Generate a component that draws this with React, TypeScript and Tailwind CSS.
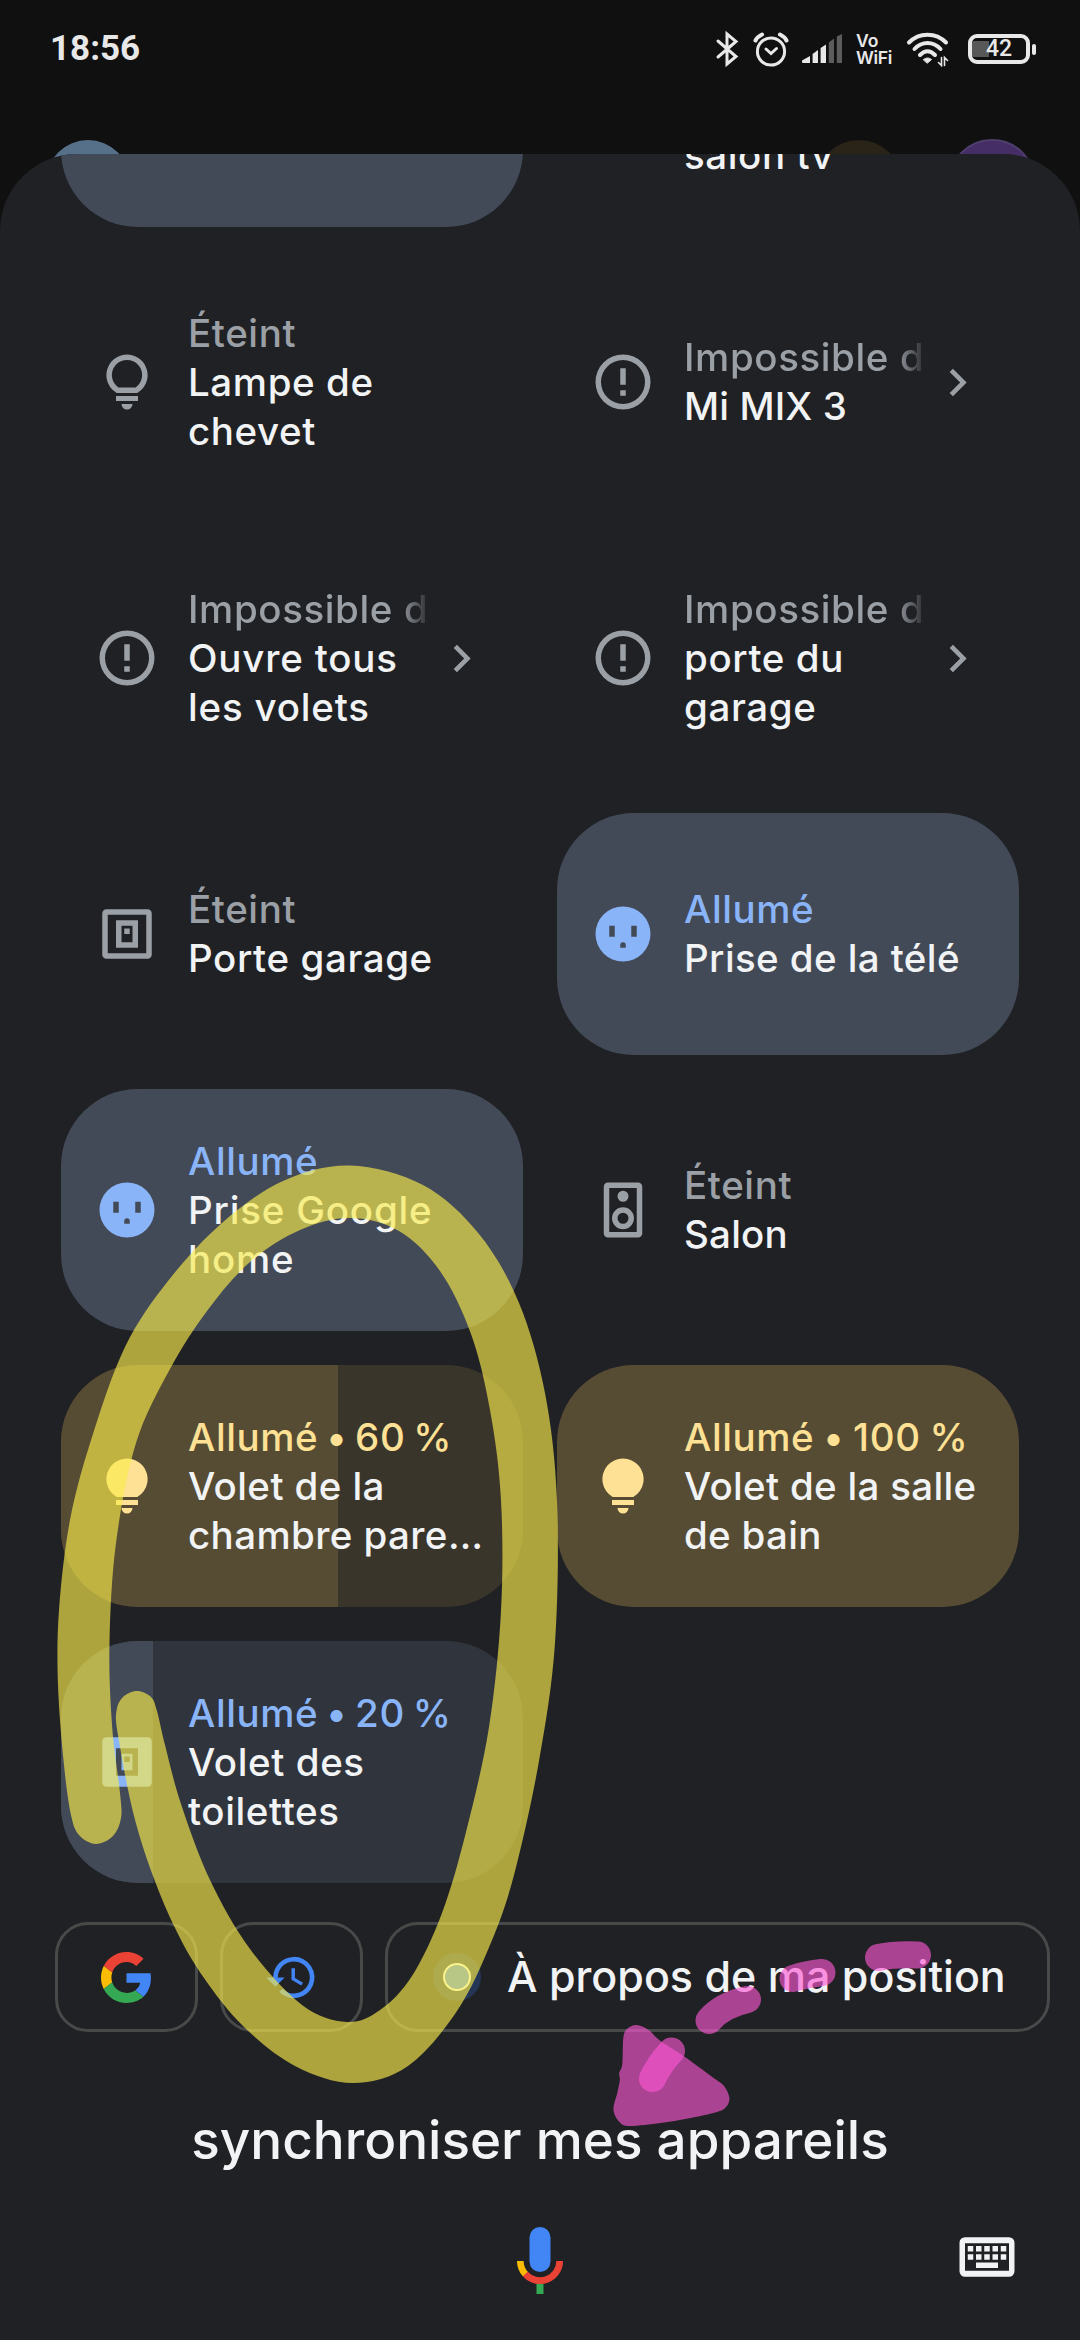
import React from 'react';

type IconName = 'bulb' | 'bulbOn' | 'error' | 'switch' | 'switchOn' | 'outlet' | 'speaker';
type Tone = 'off' | 'blue' | 'amber';

interface Device {
  state: string;
  lines: string[];
  icon?: IconName;
  tone: Tone;
  level?: number;
  link?: boolean;
  stateClass?: string;
  titleClass?: string;
}

const devices: Device[] = [
  { state: '', lines: [''], tone: 'blue' },
  { state: '\u00a0', lines: ['\u00a0', 'salon tv'], tone: 'off' },
  { state: 'Éteint', lines: ['Lampe de', 'chevet'], icon: 'bulb', tone: 'off' },
  { state: 'Impossible de', lines: ['Mi MIX 3'], icon: 'error', tone: 'off', link: true, titleClass: 'tracking-[0.1px]' },
  { state: 'Impossible de', lines: ['Ouvre tous', 'les volets'], icon: 'error', tone: 'off', link: true, titleClass: 'tracking-[0.8px]' },
  { state: 'Impossible de', lines: ['porte du', 'garage'], icon: 'error', tone: 'off', link: true },
  { state: 'Éteint', lines: ['Porte garage'], icon: 'switch', tone: 'off' },
  { state: 'Allumé', lines: ['Prise de la télé'], icon: 'outlet', tone: 'blue', titleClass: 'tracking-[0.4px]' },
  { state: 'Allumé', lines: ['Prise Google', 'home'], icon: 'outlet', tone: 'blue', titleClass: 'tracking-[0.8px]' },
  { state: 'Éteint', lines: ['Salon'], icon: 'speaker', tone: 'off', titleClass: 'tracking-[0.2px]' },
  {
    state: 'Allumé • 60 %',
    lines: ['Volet de la', 'chambre pare…'],
    icon: 'bulbOn',
    tone: 'amber',
    level: 60,
    stateClass: '[word-spacing:-3px]',
    titleClass: 'tracking-[0.4px]',
  },
  {
    state: 'Allumé • 100 %',
    lines: ['Volet de la salle', 'de bain'],
    icon: 'bulbOn',
    tone: 'amber',
    stateClass: '[word-spacing:-2px]',
    titleClass: 'tracking-[0.3px]',
  },
  { state: 'Allumé • 20 %', lines: ['Volet des', 'toilettes'], icon: 'switchOn', tone: 'blue', level: 20, stateClass: '[word-spacing:-3px]' },
];

const iconPaths: Record<IconName, string> = {
  bulb: 'M8.26 16A7.5 7.5 0 1 1 15.74 16ZM8.84 14H15.16A5.5 5.5 0 1 0 8.84 14ZM8 17.1H16V18.9H8ZM10 20H14A2 2 0 0 1 10 20Z',
  bulbOn: 'M8.26 16A7.5 7.5 0 1 1 15.74 16ZM8 17.1H16V18.9H8ZM10 20H14A2 2 0 0 1 10 20Z',
  error: 'M12 2A10 10 0 1 1 12 22A10 10 0 1 1 12 2ZM12 4A8 8 0 1 0 12 20A8 8 0 1 0 12 4ZM11 7H13V13H11ZM11 15H13V17H11Z',
  switch: 'M4.5 3H19.5A1.5 1.5 0 0 1 21 4.5V19.5A1.5 1.5 0 0 1 19.5 21H4.5A1.5 1.5 0 0 1 3 19.5V4.5A1.5 1.5 0 0 1 4.5 3ZM5 5V19H19V5ZM8 7H16V17H8ZM10 9V15H14V9ZM11 10H13V12H11Z',
  switchOn: 'M4.5 3H19.5A1.5 1.5 0 0 1 21 4.5V19.5A1.5 1.5 0 0 1 19.5 21H4.5A1.5 1.5 0 0 1 3 19.5V4.5A1.5 1.5 0 0 1 4.5 3ZM8 7V17H16V7ZM10 9H14V15H10ZM11 10V12H13V10Z',
  outlet: 'M12 2A10 10 0 1 1 12 22A10 10 0 1 1 12 2ZM7 9V13H9V9ZM15 9V13H17V9ZM11 17H13V16A1 1 0 0 0 11 16Z',
  speaker: 'M6.5 2H17.5A1.5 1.5 0 0 1 19 3.5V20.5A1.5 1.5 0 0 1 17.5 22H6.5A1.5 1.5 0 0 1 5 20.5V3.5A1.5 1.5 0 0 1 6.5 2ZM7 4V20H17V4ZM12 5A2 2 0 1 1 12 9A2 2 0 1 1 12 5ZM12 11A4 4 0 1 1 12 19A4 4 0 1 1 12 11ZM12 13A2 2 0 1 0 12 17A2 2 0 1 0 12 13Z',
};

const tileBg: Record<Tone, string> = {
  off: '',
  blue: 'bg-[#434a57]',
  amber: 'bg-[#564b33]',
};

const dimBg: Record<Tone, string> = {
  off: '',
  blue: 'bg-[#30343d]',
  amber: 'bg-[#3a352b]',
};

const accent: Record<Tone, string> = {
  off: 'text-[#9aa0a6]',
  blue: 'text-[#8ab4f8]',
  amber: 'text-[#fee194]',
};

const Tile: React.FC<{ device: Device }> = ({ device }) => {
  const { state, lines, icon, tone, level, link, stateClass = '', titleClass = 'tracking-[0.6px]' } = device;
  const sliding = level !== undefined;

  return (
    <div
      className={`relative flex h-[242px] items-center overflow-hidden rounded-[77px] pl-[33px] pr-[34px] ${
        sliding ? dimBg[tone] : tileBg[tone]
      }`}
    >
      {sliding && <div className={`absolute inset-y-0 left-0 ${tileBg[tone]}`} style={{ width: `${level}%` }} />}
      <svg viewBox="0 0 24 24" className={`relative size-[66px] shrink-0 ${accent[tone]}`}>
        {icon && <path d={iconPaths[icon]} fill="currentColor" fillRule="evenodd" />}
      </svg>
      <div className="relative ml-[28px] min-w-0 flex-1 whitespace-nowrap text-[38.5px] font-medium leading-[49px]">
        <div
          className={`tracking-[0.6px] ${accent[tone]} ${stateClass} ${
            link ? 'overflow-hidden [mask-image:linear-gradient(to_right,black_86%,transparent_99%)]' : ''
          }`}
        >
          {state}
        </div>
        {lines.map((line, i) => (
          <div key={i} className={`text-[#f1f3f4] ${titleClass}`}>
            {line}
          </div>
        ))}
      </div>
      {link && (
        <svg viewBox="0 0 24 24" className="relative size-[55px] shrink-0 text-[#9aa0a6]">
          <path d="M10 6L8.59 7.41L13.17 12L8.59 16.59L10 18L16 12Z" fill="currentColor" />
        </svg>
      )}
    </div>
  );
};

const StatusIcons: React.FC = () => (
  <div className="flex items-center text-[#e8e8e8]">
    <svg width="24" height="38" viewBox="0 0 24 38" fill="none" stroke="currentColor" strokeWidth="3" strokeLinecap="round">
      <path d="M3 11L21 26.5L12 34V4L21 11.5L3 27" />
    </svg>
    <svg width="36" height="38" viewBox="0 0 36 38" className="ml-[14px]" fill="none" stroke="currentColor" strokeWidth="3" strokeLinecap="round">
      <circle cx="18" cy="21.5" r="13.6" />
      <path d="M13 19L18 23.5L23.5 18.5" />
      <path d="M2.5 10.5C4 7.5 6 6 9 4.5M33.5 10.5C32 7.5 30 6 27 4.5" strokeWidth="4" />
    </svg>
    <svg width="40" height="30" viewBox="0 0 40 30" className="ml-[13px]" fill="currentColor">
      <path d="M0 26.5L8 22V29H1Q0 29 0 28ZM10.6 20L16 16V29H10.6ZM18.6 14L24 10.5V29H18.6Z" />
      <path d="M26.8 8.5L32 4.5V29H26.8ZM34.8 2.5L40 0V29H34.8Z" fill="#5c5c5c" />
    </svg>
    <div className="ml-[14px] flex w-[37px] flex-col text-[17.5px] font-semibold leading-[17px]">
      <span>Vo</span>
      <span className="tracking-[-0.3px]">WiFi</span>
    </div>
    <svg width="44" height="36" viewBox="0 0 44 36" className="ml-[13px]" fill="none" stroke="currentColor" strokeWidth="4" strokeLinecap="round">
      <path d="M3 11.5C13 1 30 1 40 11.5" />
      <path d="M8.5 18C16 10 27 10 34.5 18" />
      <path d="M14 24C19 19 24 19 29 24" />
      <path d="M17.5 28.5C20 26.5 23 26.5 25.5 28.5L21.5 32Z" fill="currentColor" strokeWidth="1" />
      <path d="M35.5 26.5V34.5L32.5 31.5M38.5 34.5V26.5L41.5 29.5" strokeWidth="1.6" />
    </svg>
    <div className="ml-[18px] flex items-center gap-[2px]">
      <div className="relative flex h-[30px] w-[62px] items-center justify-center rounded-[9px] border-4 border-[#e8e8e8]">
        <div className="absolute bottom-[3px] left-0 top-[3px] w-[17px] bg-[#585858]" />
        <span className="relative font-['Roboto',sans-serif] text-[23px] font-medium leading-[22px]">42</span>
      </div>
      <div className="h-[11px] w-[4px] rounded-[2px] bg-[#e8e8e8]" />
    </div>
  </div>
);

const Suggestions: React.FC = () => (
  <div className="ml-[55px] mt-[39px] flex gap-[22px]">
    <div className="flex h-[110px] w-[143px] items-center justify-center rounded-[33px] border-[3px] border-[#484949]">
      <svg viewBox="0 0 48 48" className="size-[51px]">
        <path fill="#ea4335" d="M24 9.5c3.54 0 6.71 1.22 9.21 3.6l6.85-6.85C35.9 2.38 30.47 0 24 0 14.62 0 6.51 5.38 2.56 13.22l7.98 6.19C12.43 13.72 17.74 9.5 24 9.5z" />
        <path fill="#4285f4" d="M46.98 24.55c0-1.57-.15-3.09-.38-4.55H24v9.02h12.94c-.58 2.96-2.26 5.48-4.78 7.18l7.73 6c4.51-4.18 7.09-10.36 7.09-17.65z" />
        <path fill="#fbbc05" d="M10.53 28.59c-.48-1.45-.76-2.99-.76-4.59s.27-3.14.76-4.59l-7.98-6.19C.92 16.46 0 20.12 0 24c0 3.88.92 7.54 2.56 10.78l7.97-6.19z" />
        <path fill="#34a853" d="M24 48c6.48 0 11.93-2.13 15.89-5.81l-7.73-6c-2.15 1.45-4.92 2.3-8.16 2.3-6.26 0-11.57-4.22-13.47-9.91l-7.98 6.19C6.51 42.62 14.62 48 24 48z" />
      </svg>
    </div>
    <div className="flex h-[110px] w-[143px] items-center justify-center rounded-[33px] border-[3px] border-[#484949]">
      <svg viewBox="0 0 24 24" className="size-[55px]">
        <path fill="#4285f4" d="M13 3a9 9 0 0 0-9 9H1l3.89 3.89.07.14L9 12H6a7 7 0 1 1 2.06 4.94l-1.42 1.42A9 9 0 1 0 13 3zm-1 5v5l4.28 2.54.72-1.21-3.5-2.08V8H12z" />
      </svg>
    </div>
    <div className="flex h-[110px] w-[665px] items-center rounded-[33px] border-[3px] border-[#484949] pl-[45px]">
      <div className="flex size-[48px] items-center justify-center rounded-full bg-[#243555]">
        <div className="size-[28px] rounded-full border-2 border-white bg-[#4285f4]" />
      </div>
      <span className="ml-[26px] whitespace-nowrap pb-[2px] text-[43px] font-medium leading-[50px] text-[#f1f3f4]">
        À propos de ma position
      </span>
    </div>
  </div>
);

const MicIcon: React.FC = () => (
  <svg width="66" height="72" viewBox="0 0 66 72" fill="none">
    <rect x="22.5" y="3" width="21" height="45" rx="10.5" fill="#4285f4" />
    <path d="M13.3 37A19.7 19.7 0 0 0 18.5 50.3" stroke="#fbbc05" strokeWidth="6.7" />
    <path d="M18.3 50.1A19.7 19.7 0 0 0 52.7 37" stroke="#ea4335" strokeWidth="6.7" />
    <path d="M33 60V70" stroke="#34a853" strokeWidth="7" />
  </svg>
);

const KeyboardIcon: React.FC = () => (
  <svg viewBox="0 0 24 24" className="size-[66px] text-[#f1f3f4]">
    <path
      fill="currentColor"
      fillRule="evenodd"
      d="M4 4.8H20A2 2 0 0 1 22 6.8V17.2A2 2 0 0 1 20 19.2H4A2 2 0 0 1 2 17.2V6.8A2 2 0 0 1 4 4.8ZM4 7V17H20V7ZM5 8H7V10H5ZM8 8H10V10H8ZM11 8H13V10H11ZM14 8H16V10H14ZM17 8H19V10H17ZM5 11H7V13H5ZM8 11H10V13H8ZM11 11H13V13H11ZM14 11H16V13H14ZM17 11H19V13H17ZM8 14H16V16H8Z"
    />
  </svg>
);

// Closed Catmull-Rom curve through the points, as cubic beziers
type Point = [number, number];
const smooth = (pts: Point[]) => {
  const n = pts.length;
  let d = `M${pts[0][0]} ${pts[0][1]}`;
  for (let i = 0; i < n; i++) {
    const [p0, p1, p2, p3] = [pts[(i + n - 1) % n], pts[i], pts[(i + 1) % n], pts[(i + 2) % n]];
    d += `C${p1[0] + (p2[0] - p0[0]) / 6} ${p1[1] + (p2[1] - p0[1]) / 6} ${p2[0] - (p3[0] - p1[0]) / 6} ${
      p2[1] - (p3[1] - p1[1]) / 6
    } ${p2[0]} ${p2[1]}`;
  }
  return d + 'Z';
};

const loop: Point[] = [
  // outer edge
  [137, 1691], [123, 1697], [116.5, 1711], [118, 1735], [133, 1812], [153, 1876], [177, 1932], [204, 1978],
  [243, 2026], [295, 2066], [353, 2083], [408, 2066], [457, 2011], [490, 1945], [514, 1875], [539, 1761],
  [555, 1643], [557, 1501], [545, 1393], [519, 1303], [479, 1234], [423, 1185], [350, 1165.5], [283, 1181],
  [222, 1223], [168, 1281], [125, 1347], [92, 1437], [70, 1520], [59, 1610], [58, 1685], [64, 1765], [71, 1815],
  [79, 1835], [95.8, 1844], [113, 1836], [121, 1818],
  // inner edge
  [120, 1793], [112, 1725], [109.5, 1643], [116, 1543], [136, 1443], [170, 1369], [207, 1311], [250, 1262],
  [300, 1230], [350, 1218], [399, 1231], [440, 1271], [471, 1334], [490, 1410], [501, 1500], [501, 1611],
  [489, 1727], [466, 1832], [442, 1913], [412, 1976], [380, 2010], [346.5, 2022], [302, 2005], [250, 1949],
  [210, 1880], [181, 1804], [165, 1745], [157, 1711], [151, 1697],
];

const arrowHead: Point[] = [
  [623.3, 2038], [627, 2029], [636.5, 2025], [648.5, 2030], [660.5, 2041], [684.6, 2056.7], [712, 2076.7],
  [724, 2086], [729.4, 2098], [726, 2107], [717, 2112], [688, 2118.5], [660.5, 2123], [630, 2126], [620, 2122.5],
  [613.5, 2110], [617.5, 2092], [619.8, 2080], [619.2, 2073], [622.3, 2064],
];

const Annotations: React.FC = () => (
  <svg className="pointer-events-none absolute inset-0" width="1080" height="2340" viewBox="0 0 1080 2340" fill="none">
    <path d={smooth(loop)} fill="#f9eb4c" fillOpacity="0.65" />
    <path d={smooth(arrowHead)} fill="#fd57d4" fillOpacity="0.63" />
    <g stroke="#fd57d4" strokeOpacity="0.63" strokeWidth="27" strokeLinecap="round">
      <path d="M878.5 1957.5Q895 1954 917.5 1955" />
      <path d="M793 1978.5Q807 1974 822 1972.5" />
      <path d="M709 2020.5Q722 2005 747.5 1999.5" />
      <path d="M652.5 2078.5Q660 2063 671.5 2051" />
    </g>
  </svg>
);

export default function App() {
  return (
    <div className="relative flex h-[2340px] w-[1080px] flex-col overflow-hidden bg-[#101010] font-['Inter','Noto_Sans',sans-serif]">
      <header className="relative h-[154px] shrink-0">
        <div className="flex items-center justify-between pl-[50px] pr-[44px] pt-[29px]">
          <span className="font-['Roboto',sans-serif] text-[35px] font-bold leading-[40px] text-[#e8e8e8]">18:56</span>
          <StatusIcons />
        </div>
        <div className="absolute left-[46px] top-[140px] size-[84px] rounded-full bg-[#56708a]" />
        <div className="absolute left-[816px] top-[140px] size-[86px] rounded-full bg-[#2a2418]" />
        <div className="absolute left-[948px] top-[139px] size-[88px] rounded-full border-2 border-[#503e6e] bg-[#452d66]" />
      </header>

      <main className="relative flex-1 overflow-hidden rounded-t-[77px] bg-[#202124]">
        <div className="-mt-[169px] grid grid-cols-2 gap-[34px] px-[61px]">
          {devices.map((device, i) => (
            <Tile key={i} device={device} />
          ))}
        </div>

        <Suggestions />

        <p className="mt-[73px] text-center text-[53px] font-medium leading-[70px] text-[#f1f3f4]">
          synchroniser mes appareils
        </p>

        <div className="mt-[49px] grid grid-cols-3 items-start px-[60px]">
          <div />
          <div className="flex justify-center">
            <MicIcon />
          </div>
          <div className="flex justify-end">
            <KeyboardIcon />
          </div>
        </div>
      </main>

      <Annotations />
    </div>
  );
}
